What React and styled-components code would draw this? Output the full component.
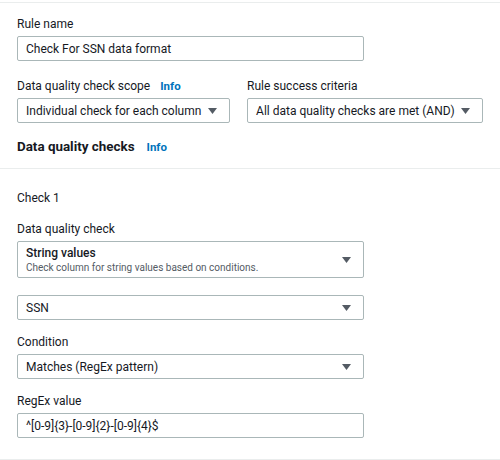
import React from "react";
import styled, { createGlobalStyle } from "styled-components";

const Global = createGlobalStyle`
  html, body { margin: 0; padding: 0; background: #fff; }
  body { font-family: Roboto, "Noto Sans", sans-serif; color: #16191f; font-size: 12px; }
`;

const Section = styled.div`
  margin-top: 2px;
  border-top: 1px solid #eaeded;
  padding: 13px 17px 11px 17px;
  display: flex;
  flex-direction: column;
`;

const CheckSection = styled.div`
  border-top: 1px solid #eaeded;
  border-bottom: 1px solid #eaeded;
  padding: 21px 17px 21px 17px;
  display: flex;
  flex-direction: column;
`;

const Field = styled.div`
  display: flex;
  flex-direction: column;
  gap: 4px;
  width: ${(p) => p.$w || 347}px;
  margin-top: ${(p) => p.$mt || 0}px;
`;

const Row = styled.div`
  display: flex;
  gap: 17px;
  margin-top: ${(p) => p.$mt || 0}px;
`;

const Label = styled.div`
  font-size: 12px;
  line-height: 16px;
  color: #16191f;
  display: flex;
  align-items: baseline;
  gap: 10px;
`;

const Info = styled.span`
  color: #0073bb;
  font-weight: 700;
  font-size: 11.5px;
`;

const Heading = styled.div`
  font-size: 13.4px;
  font-weight: 700;
  line-height: 20px;
  display: flex;
  align-items: baseline;
  gap: 12px;
  margin-top: 14px;
`;

const Box = styled.div`
  box-sizing: border-box;
  height: ${(p) => p.$h || 25}px;
  border: 1px solid #aab7b8;
  border-radius: 2px;
  padding: 0 12px 0 8px;
  display: flex;
  align-items: center;
  justify-content: space-between;
  font-size: 12px;
  color: #16191f;
  background: #fff;
  white-space: nowrap;
`;

const Stack = styled.div`
  display: flex;
  flex-direction: column;
  line-height: 15px;
`;

const Main = styled.span`
  font-weight: 500;
`;

const Sub = styled.span`
  font-size: 10px;
  line-height: 13px;
  color: #545b64;
`;

const Caret = () => (
  <svg width="9" height="6" viewBox="0 0 9 6">
    <path d="M0 0 L9 0 L4.5 6 Z" fill="#545b64" />
  </svg>
);

const Select = ({ children, h }) => (
  <Box $h={h}>
    {children}
    <Caret />
  </Box>
);

export default function App() {
  return (
    <>
      <Global />
      <Section>
        <Field>
          <Label>Rule name</Label>
          <Box>Check For SSN data format</Box>
        </Field>
        <Row $mt={17}>
          <Field $w={214}>
            <Label>
              Data quality check scope <Info>Info</Info>
            </Label>
            <Select>Individual check for each column</Select>
          </Field>
          <Field $w={237}>
            <Label>Rule success criteria</Label>
            <Select>All data quality checks are met (AND)</Select>
          </Field>
        </Row>
        <Heading>
          Data quality checks <Info>Info</Info>
        </Heading>
      </Section>
      <CheckSection>
        <Label>Check 1</Label>
        <Field $mt={15}>
          <Label>Data quality check</Label>
          <Select h={37}>
            <Stack>
              <Main>String values</Main>
              <Sub>Check column for string values based on conditions.</Sub>
            </Stack>
          </Select>
        </Field>
        <Field $mt={17}>
          <Select>SSN</Select>
        </Field>
        <Field $mt={14}>
          <Label>Condition</Label>
          <Select>Matches (RegEx pattern)</Select>
        </Field>
        <Field $mt={14}>
          <Label>RegEx value</Label>
          <Box>^[0-9]{"{3}"}-[0-9]{"{2}"}-[0-9]{"{4}"}$</Box>
        </Field>
      </CheckSection>
    </>
  );
}
